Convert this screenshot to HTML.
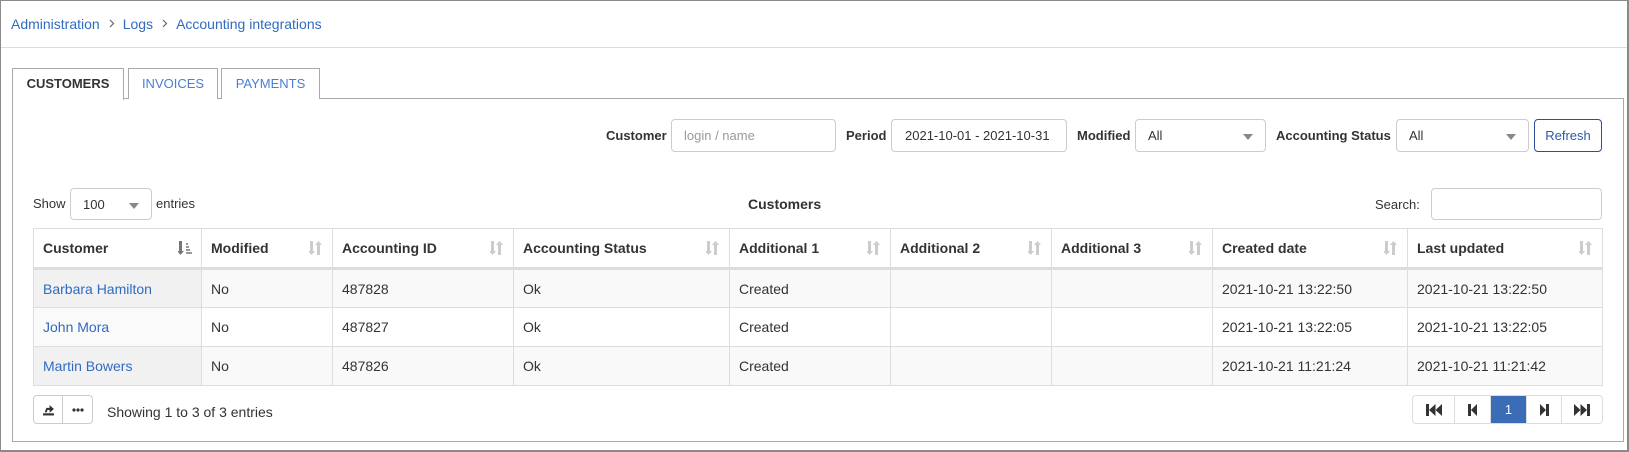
<!DOCTYPE html>
<html><head><meta charset="utf-8"><style>
*{box-sizing:border-box}
body{margin:0;width:1629px;height:452px;font-family:"Liberation Sans",Arial,sans-serif;font-size:14px;color:#333;background:#fff;position:relative;overflow:hidden}
.frame{position:absolute;left:0;top:0;width:1629px;height:452px;border:1px solid #8a8a8a;border-right:2px solid #8a8a8a;border-bottom:2px solid #8a8a8a}
.bc{position:absolute;left:11px;top:16px;color:#2f6bc1;font-size:14px}
.bc svg{margin:0 8px 1px 9px}
.hl{position:absolute;left:1px;right:2px;top:47px;border-top:1px solid #ddd}
.tab{position:absolute;top:68px;height:31px;border:1px solid #aaa;border-bottom:none;font-size:13px;color:#4a7fd0;text-align:center;line-height:29px;background:#fff}
.panel{position:absolute;left:12px;top:98px;width:1612px;height:344px;border:1px solid #aaa}
.a{position:absolute}
.lbl{font-weight:bold;font-size:13px;color:#333}
.inp{border:1px solid #ccc;border-radius:4px;height:33px;font-size:13px;padding:0 12px;line-height:31px;white-space:nowrap}
.arr{position:absolute;right:12px;top:14px;border-left:5px solid transparent;border-right:5px solid transparent;border-top:6px solid #888}
table{position:absolute;left:33px;top:228px;width:1569px;border-collapse:collapse;font-size:14px;table-layout:fixed}
td,th{border:1px solid #ddd;padding:0 9px;text-align:left;height:39px}
th{height:40px;border-bottom:3px solid #ddd;position:relative;font-weight:bold}
th svg{position:absolute;right:9px;top:12px}
tr.o td{background:#f9f9f9}
tr.o td.c1{background:#f1f1f1}
tr.e td.c1{background:#fafafa}
a{color:#2f6bc1;text-decoration:none}
.pg{position:absolute;top:395px;left:1412px;height:29px;border:1px solid #ddd;border-radius:4px;display:flex;overflow:hidden}
.pg div{height:27px;border-left:1px solid #ddd;display:flex;align-items:center;justify-content:center;font-size:13px;color:#333}
.pg div:first-child{border-left:none}
</style></head><body>
<div class="frame"></div>
<div class="bc">Administration<svg width="6" height="9"><path d="M1 1l3.5 3.5L1 8" stroke="#666" stroke-width="1.2" fill="none"/></svg>Logs<svg width="6" height="9"><path d="M1 1l3.5 3.5L1 8" stroke="#666" stroke-width="1.2" fill="none"/></svg>Accounting integrations</div>
<div class="hl"></div>
<div class="panel"></div>
<div class="tab" style="left:12px;width:112px;color:#333;font-weight:bold;height:32px;z-index:2">CUSTOMERS</div>
<div class="tab" style="left:128px;width:90px">INVOICES</div>
<div class="tab" style="left:221px;width:99px">PAYMENTS</div>

<div class="a lbl" style="left:606px;top:128px">Customer</div>
<div class="a inp" style="left:671px;top:119px;width:165px;color:#999">login / name</div>
<div class="a lbl" style="left:846px;top:128px">Period</div>
<div class="a inp" style="left:891px;top:119px;width:176px;padding:0 13px">2021-10-01 - 2021-10-31</div>
<div class="a lbl" style="left:1077px;top:128px">Modified</div>
<div class="a inp" style="left:1135px;top:119px;width:131px">All<span class="arr"></span></div>
<div class="a lbl" style="left:1276px;top:128px">Accounting Status</div>
<div class="a inp" style="left:1396px;top:119px;width:133px">All<span class="arr"></span></div>
<div class="a inp" style="left:1534px;top:119px;width:68px;border-color:#2d4f9a;color:#2d5aa8;padding:0;text-align:center">Refresh</div>

<div class="a" style="left:33px;top:196px;font-size:13px">Show</div>
<div class="a inp" style="left:70px;top:188px;width:82px;height:32px">100<span class="arr"></span></div>
<div class="a" style="left:156px;top:196px;font-size:13px">entries</div>
<div class="a" style="left:748px;top:196px;font-weight:bold">Customers</div>
<div class="a" style="left:1375px;top:197px;font-size:13px">Search:</div>
<div class="a inp" style="left:1431px;top:188px;width:171px;height:32px"></div>

<svg width="0" height="0" style="position:absolute"><defs>
<g id="srt"><path d="M1 0h3v10h2l-3.5 4-3.5-4h2z" fill="#ccc"/><path d="M8 14h3V4h2L9.5 0 6 4h2z" fill="#ccc"/></g>
</defs></svg>
<table>
<colgroup><col style="width:168px"><col style="width:131px"><col style="width:181px"><col style="width:216px"><col style="width:161px"><col style="width:161px"><col style="width:161px"><col style="width:195px"><col style="width:195px"></colgroup>
<tr><th>Customer<svg width="14" height="14"><path d="M1 0h3v10h2l-3.5 4-3.5-4h2z" fill="#777"/><path d="M8 2h2v2H8zM8 5h3v2H8zM8 8h4v2H8zM8 11h6v2H8z" fill="#999"/></svg></th>
<th>Modified<svg width="14" height="14"><use href="#srt"/></svg></th>
<th>Accounting ID<svg width="14" height="14"><use href="#srt"/></svg></th>
<th>Accounting Status<svg width="14" height="14"><use href="#srt"/></svg></th>
<th>Additional 1<svg width="14" height="14"><use href="#srt"/></svg></th>
<th>Additional 2<svg width="14" height="14"><use href="#srt"/></svg></th>
<th>Additional 3<svg width="14" height="14"><use href="#srt"/></svg></th>
<th>Created date<svg width="14" height="14"><use href="#srt"/></svg></th>
<th>Last updated<svg width="14" height="14"><use href="#srt"/></svg></th></tr>
<tr class="o"><td class="c1"><a>Barbara Hamilton</a></td><td>No</td><td>487828</td><td>Ok</td><td>Created</td><td></td><td></td><td>2021-10-21 13:22:50</td><td>2021-10-21 13:22:50</td></tr>
<tr class="e"><td class="c1"><a>John Mora</a></td><td>No</td><td>487827</td><td>Ok</td><td>Created</td><td></td><td></td><td>2021-10-21 13:22:05</td><td>2021-10-21 13:22:05</td></tr>
<tr class="o"><td class="c1"><a>Martin Bowers</a></td><td>No</td><td>487826</td><td>Ok</td><td>Created</td><td></td><td></td><td>2021-10-21 11:21:24</td><td>2021-10-21 11:21:42</td></tr>
</table>

<div class="a" style="left:33px;top:395px;width:60px;height:29px;border:1px solid #ccc;border-radius:4px;display:flex">
<div style="width:29px;border-right:1px solid #ccc;display:flex;align-items:center;justify-content:center"><svg width="13" height="13" viewBox="0 0 12 12"><rect x="1" y="9.5" width="10" height="2" fill="#333"/><path d="M2.5 8.5 L4 4.5 L7 4.5 L7 2 L11 5.5 L7 9 L7 6.5 L5 6.5 L4.5 8.5 Z" fill="#333"/></svg></div>
<div style="flex:1;display:flex;align-items:center;justify-content:center"><svg width="12" height="4"><circle cx="2" cy="2" r="1.6" fill="#333"/><circle cx="6" cy="2" r="1.6" fill="#333"/><circle cx="10" cy="2" r="1.6" fill="#333"/></svg></div></div>
<div class="a" style="left:107px;top:404px">Showing 1 to 3 of 3 entries</div>

<div class="pg">
<div style="width:41px"><svg width="16" height="12"><rect x="0" y="0" width="3" height="12" fill="#333"/><path d="M3 6l6.5-6v12zM9.5 6L16 0v12z" fill="#333"/></svg></div>
<div style="width:36px"><svg width="9" height="12"><rect x="0" y="0" width="3" height="12" fill="#333"/><path d="M3 6l6-6v12z" fill="#333"/></svg></div>
<div style="width:36px;background:#3a6db5;color:#fff">1</div>
<div style="width:35px"><svg width="9" height="12"><path d="M0 0l6 6-6 6z" fill="#333"/><rect x="6" y="0" width="3" height="12" fill="#333"/></svg></div>
<div style="width:41px"><svg width="16" height="12"><path d="M0 0l6.5 6L0 12zM6.5 0L13 6l-6.5 6z" fill="#333"/><rect x="13" y="0" width="3" height="12" fill="#333"/></svg></div>
</div>
</body></html>
